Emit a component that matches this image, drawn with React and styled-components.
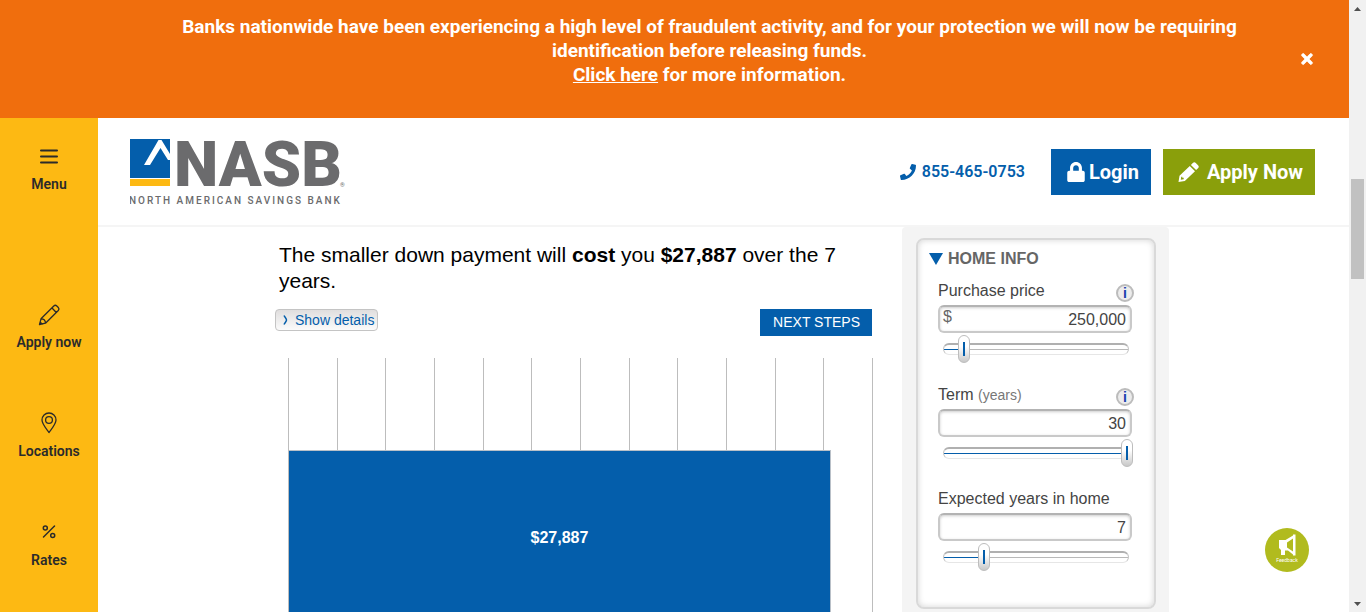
import React, { useState } from "react";
import styled, { createGlobalStyle } from "styled-components";
import { FaPhone, FaLock, FaTimes } from "react-icons/fa";

const BLUE = "#045eab";
const GRAY = "#6b6b6d";

const GlobalStyle = createGlobalStyle`
  * { box-sizing: border-box; }
  body { margin: 0; font-family: Roboto, sans-serif; color: #222; background: #fff; }
  button, input { font-family: inherit; }
  a { color: inherit; text-decoration: none; }
`;

const Shell = styled.div`
  display: grid;
  grid-template-columns: minmax(0, 1fr) 17px;
  height: 100vh;
  overflow: hidden;
`;

const Page = styled.div`
  display: flex;
  flex-direction: column;
  min-height: 0;
`;

const Banner = styled.div`
  display: grid;
  grid-template-columns: minmax(0, 1fr) 16px;
  align-items: center;
  gap: 32px;
  flex: none;
  padding: 15px 34px 31px 152px;
  background: #f06e0d;
  color: #fff;
`;

const BannerText = styled.p`
  margin: 0;
  font-size: 19px;
  font-weight: 700;
  line-height: 24px;
  text-align: center;
  a { text-decoration: underline; }
`;

const CloseButton = styled.button`
  display: flex;
  padding: 16px 0 0;
  border: 0;
  background: none;
  color: #fff;
  font-size: 16px;
  path { stroke: #fff; stroke-width: 24px; }
`;

const Body = styled.div`
  display: flex;
  flex: 1;
  min-height: 0;
`;

const Sidebar = styled.nav`
  display: flex;
  flex-direction: column;
  flex: none;
  width: 98px;
  padding-top: 26px;
  background: #fdb913;
`;

const SideLink = styled.a`
  display: flex;
  flex-direction: column;
  align-items: center;
  gap: 6px;
  flex: none;
  height: ${(p) => (p.$tall ? 158 : 109)}px;
  font-size: 14px;
  font-weight: 600;
  line-height: 16px;
  color: #2b2b2b;
  svg { width: 26px; height: 26px; }
`;

const Content = styled.div`
  display: flex;
  flex-direction: column;
  flex: 1;
  min-width: 0;
`;

const Header = styled.header`
  display: flex;
  align-items: center;
  flex: none;
  height: 109px;
  padding: 0 34px 0 32px;
  border-bottom: 2px solid #f5f5f5;
`;

const LogoLink = styled.a`
  margin-right: auto;
  svg { display: block; }
`;

const Phone = styled.a`
  display: flex;
  align-items: center;
  gap: 6px;
  margin-right: 26px;
  font-size: 16px;
  font-weight: 600;
  color: ${BLUE};
`;

const HeaderButton = styled.button`
  display: flex;
  align-items: center;
  gap: ${(p) => p.$gap}px;
  height: 46px;
  padding: 0 12px 0 15px;
  border: 0;
  background: ${(p) => p.$color};
  color: #fff;
  font-size: 20px;
  font-weight: 700;
  & + & { margin-left: 12px; }
`;

const Main = styled.main`
  display: flex;
  gap: 30px;
  flex: 1;
  width: 100%;
  max-width: 897px;
  min-height: 0;
  margin: 0 auto;
  padding-right: 3px;
  font-family: "Liberation Sans", Arial, sans-serif;
`;

const Results = styled.section`
  display: flex;
  flex-direction: column;
  flex: 1;
  min-width: 0;
`;

const Headline = styled.p`
  margin: 0;
  padding: 15px 0 0 4px;
  font-size: 21px;
  line-height: 26px;
  color: #000;
`;

const Actions = styled.div`
  display: flex;
  justify-content: space-between;
  align-items: flex-start;
  padding-top: 15px;
`;

const DetailsButton = styled.button`
  display: flex;
  align-items: center;
  gap: 7px;
  height: 22px;
  padding: 0 3px 0 7px;
  border: 1px solid #c4c4c4;
  border-radius: 4px;
  background: linear-gradient(#e0dede, #fbfbfb);
  color: ${BLUE};
  font-size: 14px;
  svg { width: 5px; height: 10px; }
`;

const NextButton = styled.button`
  height: 27px;
  padding: 0 12px 2px 13px;
  border: 0;
  background: ${BLUE};
  color: #fff;
  font-size: 14px;
`;

const Chart = styled.div`
  display: grid;
  flex: 1;
  min-height: 254px;
  margin: 22px 0 0 13px;
`;

const GridLines = styled.div`
  display: grid;
  grid-area: 1 / 1;
  grid-template-columns: repeat(12, 1fr);
  margin-right: -1px;
  border-left: 1px solid #bdbdbd;
`;

const GridLine = styled.span`
  border-right: 1px solid #bdbdbd;
`;

const Bar = styled.div`
  display: flex;
  justify-content: center;
  grid-area: 1 / 1;
  z-index: 1;
  margin: 92px 0 0 1px;
  padding-top: 78px;
  border: solid #b9c0c8;
  border-width: 1px 1px 0 0;
  background: ${BLUE};
  color: #fff;
  font-size: 16px;
  font-weight: 700;
  line-height: 18px;
`;

const Aside = styled.aside`
  flex: none;
  width: 267px;
  padding: 11px 13px 0 14px;
  border-radius: 4px 4px 0 0;
  background: #f4f4f4;
`;

const Card = styled.section`
  height: 371px;
  padding: 10px 22px 0 20px;
  border: 2px solid #d9d9d9;
  border-radius: 8px;
  background: #fff;
  box-shadow: inset 0 0 6px #d4d4d4;
`;

const CardTitle = styled.h2`
  display: flex;
  align-items: center;
  gap: 5px;
  margin: 0 0 13px -9px;
  font-size: 16px;
  font-weight: 700;
  line-height: 18px;
  color: #666;
`;

const Field = styled.div`
  height: 104px;
`;

const LabelRow = styled.div`
  display: flex;
  align-items: center;
  justify-content: space-between;
  height: 24px;
  margin-right: -2px;
  font-size: 16px;
  line-height: 18px;
  color: #444;
  label { padding-bottom: 4px; }
  small { font-size: 14px; color: #777; }
`;

const InfoButton = styled.button`
  width: 18px;
  height: 18px;
  padding: 0;
  border: 2px solid #bcbcbc;
  border-radius: 50%;
  background: #ececec;
  color: #1a3fae;
  font-size: 14px;
  font-weight: 700;
  line-height: 13px;
`;

const InputBox = styled.div`
  display: flex;
  height: 28px;
  padding: 0 4px 0 3px;
  border: 2px solid #c9c9c9;
  border-top-color: #b3b3b3;
  border-radius: 6px;
  box-shadow: inset 0 1px 3px #ccc;
  font-size: 16px;
  line-height: 20px;
  color: #666;
`;

const NumberInput = styled.input`
  flex: 1;
  width: 100%;
  min-width: 0;
  padding: 2px 0 0;
  border: 0;
  outline: 0;
  background: none;
  color: #444;
  font-size: 16px;
  text-align: right;
`;

const Track = styled.div`
  display: flex;
  align-items: center;
  height: 12px;
  margin: 10px 3px 0 5px;
  border: solid #c4c4c4;
  border-width: 2px 1px 1px;
  border-top-color: #b0b0b0;
  border-bottom-color: #e6e6e6;
  border-radius: 6px;
  background:
    linear-gradient(${BLUE}, ${BLUE}) 0 4px / var(--filled) 1px no-repeat,
    linear-gradient(#b9b9b9, #b9b9b9) 0 4px / 100% 1px no-repeat;
`;

const Range = styled.input`
  appearance: none;
  flex: none;
  width: calc(100% + 8px);
  height: 28px;
  margin: 0 -5px 2px -3px;
  background: none;
  &::-webkit-slider-thumb {
    appearance: none;
    width: 12px;
    height: 28px;
    border: 1px solid #bdbdbd;
    border-radius: 6px;
    background:
      linear-gradient(${BLUE}, ${BLUE}) 4px 6px / 2px 14px no-repeat,
      linear-gradient(#fff 40%, #c8c8c8);
  }
`;

const Feedback = styled.button`
  position: fixed;
  right: 57px;
  bottom: 40px;
  display: flex;
  flex-direction: column;
  align-items: center;
  width: 44px;
  height: 44px;
  padding: 6px 0 0;
  border: 0;
  border-radius: 50%;
  background: #b1bb1e;
  color: #fff;
  font-size: 5px;
  line-height: 6px;
  svg { width: 17px; height: 23px; }
`;

const ScrollRail = styled.div`
  display: grid;
  grid-template-rows: 17px 162fr 100fr 316fr 17px;
  place-items: center;
  background: #f1f1f1;
`;

const ScrollThumb = styled.span`
  grid-row: 3;
  width: 13px;
  height: 100%;
  background: #c1c1c1;
`;

const ScrollArrow = styled.svg`
  grid-row: ${(p) => (p.$down ? 5 : 1)};
  fill: #505050;
`;

const stroke = { fill: "none", stroke: "currentColor", strokeLinecap: "round", strokeLinejoin: "round" };

const MenuIcon = () => (
  <svg viewBox="0 0 26 26" {...stroke} strokeWidth="2"><path d="M5 6.500h16M5 12.500h16M5 18.500h16" /></svg>
);
const PencilIcon = () => (
  <svg viewBox="0 0 26 26" {...stroke} strokeWidth="1.300">
    <path d="M3.500 22.500 5 16.800 17.800 4a2.200 2.200 0 0 1 3 0l1.500 1.500a2.200 2.200 0 0 1 0 3L9.500 21.200ZM5 16.800c2.500-.2 4.500 1.500 4.500 4.400M16 6l4.300 4.500M4.200 20.200l2 1.800" />
  </svg>
);
const PinIcon = () => (
  <svg viewBox="0 0 26 26" {...stroke} strokeWidth="1.300">
    <path d="M13 21.500C9.500 16.800 6 12.800 6 9a7 7 0 0 1 14 0c0 3.800-3.500 7.800-7 12.500Z" />
    <circle cx="13" cy="9" r="3.400" />
  </svg>
);
const PercentIcon = () => (
  <svg viewBox="0 0 26 26" {...stroke} strokeWidth="1.500">
    <path d="M18.500 6 7.500 17" /><circle cx="9.300" cy="8" r="2" /><circle cx="16.700" cy="15.500" r="2" />
  </svg>
);
const SolidPencil = () => (
  <svg width="21" height="20" viewBox="0 0 21 20" fill="currentColor">
    <path fillRule="evenodd" d="M11.800 4 17 9.200 6.800 18.900.5 20l1-6.300ZM3.300 14.800l-.5 2.900 2.900-.5v-1.500H4.300v-.9Z" />
    <path d="m12.900 2.900 1.900-1.900q1.500-1.500 3 0l2.200 2.200q1.500 1.500 0 3l-1.900 1.900Z" />
  </svg>
);

const Logo = () => (
  <svg width="220" height="90" viewBox="0 -9 220 90" role="img" aria-label="NASB North American Savings Bank">
    <path fill={BLUE} d="M0 3h40v39H0z" />
    <path fill="#fdb913" d="M0 43h40v7H0z" />
    <path fill="#fff" d="M14 29 28.500 4h3L40 18v6h-2L30.500 12 20 29z" />
    <text x="44" y="50" fill={GRAY} fontFamily="Roboto" fontWeight="900" fontSize="63">NASB</text>
    <text x="-1" y="68" fill={GRAY} fontFamily="Roboto" fontWeight="500" fontSize="10" letterSpacing="2">NORTH AMERICAN SAVINGS BANK</text>
    <text x="210" y="51" fill={GRAY} fontFamily="Roboto" fontSize="6">®</text>
  </svg>
);

const sideLinks = [
  { label: "Menu", Icon: MenuIcon, tall: true },
  { label: "Apply now", Icon: PencilIcon },
  { label: "Locations", Icon: PinIcon },
  { label: "Rates", Icon: PercentIcon },
];

const fields = [
  { id: "price", label: "Purchase price", prefix: "$", info: true, min: 0, max: 2650000, value: 250000 },
  { id: "term", label: "Term", unit: "(years)", info: true, min: 1, max: 30, value: 30 },
  { id: "stay", label: "Expected years in home", min: 1, max: 30, value: 7 },
];

function SliderField({ id, label, unit, prefix, info, min, max, value: initial }) {
  const [value, setValue] = useState(initial);
  const change = (e) => setValue(Math.min(max, Number(e.target.value.replace(/\D/g, ""))));
  return (
    <Field>
      <LabelRow>
        <label htmlFor={id}>{label} {unit && <small>{unit}</small>}</label>
        {info && <InfoButton type="button" aria-label={`About ${label}`}>i</InfoButton>}
      </LabelRow>
      <InputBox>
        {prefix}
        <NumberInput id={id} value={value.toLocaleString("en-US")} onChange={change} />
      </InputBox>
      <Track style={{ "--filled": `${((value - min) / (max - min)) * 100}%` }}>
        <Range type="range" aria-label={label} min={min} max={max} value={value} onChange={change} />
      </Track>
    </Field>
  );
}

export default function App() {
  return (
    <Shell>
      <GlobalStyle />
      <Page>
        <Banner>
          <BannerText>
            Banks nationwide have been experiencing a high level of fraudulent activity, and for your protection we will now be requiring identification before releasing funds.
            <br />
            <a href="#more">Click here</a> for more information.
          </BannerText>
          <CloseButton type="button" aria-label="Close"><FaTimes /></CloseButton>
        </Banner>
        <Body>
          <Sidebar>
            {sideLinks.map(({ label, Icon, tall }) => (
              <SideLink key={label} href="#" $tall={tall}><Icon />{label}</SideLink>
            ))}
          </Sidebar>
          <Content>
            <Header>
              <LogoLink href="#"><Logo /></LogoLink>
              <Phone href="tel:8554650753"><FaPhone />855-465-0753</Phone>
              <HeaderButton type="button" $color={BLUE} $gap={3}><FaLock />Login</HeaderButton>
              <HeaderButton type="button" $color="#8a9f0b" $gap={8}><SolidPencil />Apply Now</HeaderButton>
            </Header>
            <Main>
              <Results>
                <Headline>
                  The smaller down payment will <b>cost</b> you <b>$27,887</b> over the 7 years.
                </Headline>
                <Actions>
                  <DetailsButton type="button">
                    <svg viewBox="0 0 5 10" fill="none" stroke="currentColor" strokeWidth="1.500"><path d="M1 .5c1 2 2.500 3 2.500 4.500S2 7.500 1 9.500" /></svg>
                    Show details
                  </DetailsButton>
                  <NextButton type="button">NEXT STEPS</NextButton>
                </Actions>
                <Chart>
                  <GridLines>
                    {Array.from({ length: 12 }, (_, i) => <GridLine key={i} />)}
                  </GridLines>
                  <Bar style={{ width: "92.8%" }}>$27,887</Bar>
                </Chart>
              </Results>
              <Aside>
                <Card>
                  <CardTitle>
                    <svg width="14" height="12" fill={BLUE}><path d="M0 0h14L7 12z" /></svg>
                    HOME INFO
                  </CardTitle>
                  {fields.map((f) => <SliderField key={f.id} {...f} />)}
                </Card>
              </Aside>
            </Main>
          </Content>
        </Body>
      </Page>
      <ScrollRail aria-hidden="true">
        <ScrollArrow width="7" height="4"><path d="M0 4h7L3.500 0z" /></ScrollArrow>
        <ScrollThumb />
        <ScrollArrow $down width="7" height="4"><path d="M0 0h7L3.500 4z" /></ScrollArrow>
      </ScrollRail>
      <Feedback type="button">
        <svg viewBox="0 0 17 23" fill="#fff">
          <path fillRule="evenodd" d="M0 6h6.500L14 1.500V.5h2.500v21H14v-1l-5-4H6V21H2v-5L0 14ZM14 4.500 8 8.500v5l6 4Z" />
        </svg>
        Feedback
      </Feedback>
    </Shell>
  );
}
